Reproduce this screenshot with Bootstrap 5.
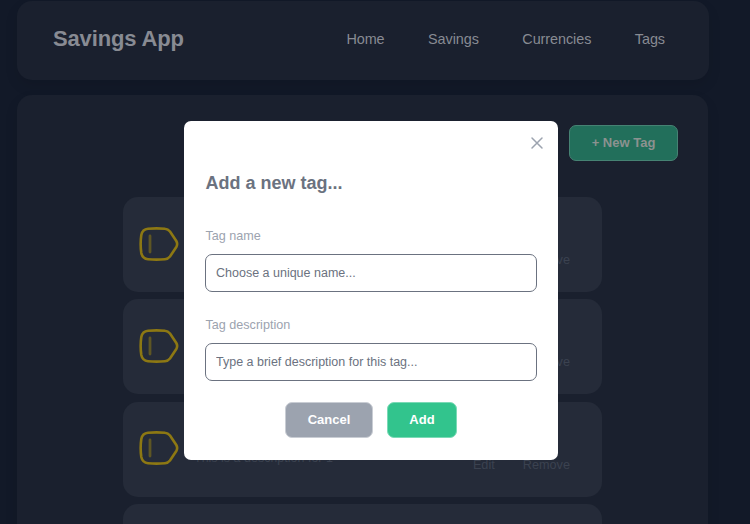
<!DOCTYPE html>
<html lang="en">
<head>
<meta charset="utf-8">
<meta name="viewport" content="width=device-width, initial-scale=1">
<title>Savings App</title>
<link rel="stylesheet" href="https://cdn.jsdelivr.net/npm/bootstrap@5.3.0/dist/css/bootstrap.min.css">
<style>
body { background: #121928; font-family: "Liberation Sans", Arial, sans-serif; }
.page-wrap { padding: 1px 41px 0 17px; }
.panel { background: #1a202e; border-radius: 15px; box-shadow: 0 6px 14px rgba(0,0,0,.09); }
.top-panel { height: 79px; padding: 0 44px 3px 36px; }
.app-name { font-size: 22px; line-height: 26px; letter-spacing: -.15px; color: #888b93; }
.top-links { gap: 43.5px; font-size: 14.4px; line-height: 20px; letter-spacing: -.06px; }
.top-links a { color: #888b93; }
.main-panel { width: 691px; height: 600px; margin-top: 15px; padding: 30px 30px 0 106px; }
.btn-app { font-size: 13px; font-weight: 700; line-height: 18px; height: 36px; border-radius: 7px; padding: 0 0 1px; }
.btn-new { width: 109px; background: #226f5b; border-color: #468273; color: #8c9290; }
.tag-list { width: 479px; gap: 7.4px; margin-top: 36px; }
.tag-item { height: 95px; flex: none; background: #252b39; border-radius: 15px; padding: 0 32px 0 15px; }
.tag-icon { width: 41px; height: 34px; margin-bottom: 2px; }
.tag-text { line-height: 18px; color: #3b4250; padding-left: 15px; }
.tag-desc { font-size: 12.5px; padding-top: 47px; }
.tag-actions { font-size: 12.7px; gap: 28px; padding-top: 54px; }
.dialog-box { left: 184px; top: 121px; width: 374px; height: 339px; background: #fff; border-radius: 7px; padding: 0 21px; }
.close-x { right: 14px; top: 15px; width: 14px; height: 14px; line-height: 0; }
.dialog-title { font-size: 18px; line-height: 22px; color: #6b7280; margin-top: 51px; padding-left: .5px; }
.dialog-form { padding-top: 33px; }
.field-label { font-size: 12.6px; line-height: 18px; color: #9ca3af; padding-left: .5px; }
.field-input { height: 38px; font-size: 12.5px; border: 1px solid #6b7280; border-radius: 7px; padding: 0 10px 1px; }
.field-input::placeholder { color: #6b7280; }
.field-label + .field-input { margin-top: 9px; }
.field-input + .field-label { margin-top: 24px; }
.form-actions { margin-top: 21px; gap: 14px; }
.btn-cancel { width: 88px; background: #9ca3af; border: 1px solid #c9cdd4; color: #fff; }
.btn-add { width: 70px; background: #32c48d; border: 1px solid #7bdab6; color: #fff; }
</style>
<script src="https://cdn.jsdelivr.net/npm/bootstrap@5.3.0/dist/js/bootstrap.bundle.min.js"></script>
</head>
<body>
<svg class="d-none">
  <symbol id="tag-icon" viewBox="0 0 41 34">
    <path d="M10 1.800Q18.500 1 27 1.800Q30 2 32 4.500L38.300 14Q40 17 38.300 20L32 29.500Q30 32 27 32.200Q18.500 33 10 32.200Q4.500 31.700 3.300 26Q2 17 3.300 8Q4.500 2.300 10 1.800Z" fill="none" stroke="#8d7813" stroke-width="2.600"/>
    <path d="M12 9V25" fill="none" stroke="#5e5624" stroke-width="2.800" stroke-linecap="round"/>
  </symbol>
</svg>
<div class="page-wrap vh-100 overflow-hidden">
  <nav class="panel top-panel d-flex align-items-center justify-content-between">
    <span class="app-name fw-bold">Savings App</span>
    <div class="top-links d-flex">
      <a class="text-decoration-none" href="#">Home</a>
      <a class="text-decoration-none" href="#">Savings</a>
      <a class="text-decoration-none" href="#">Currencies</a>
      <a class="text-decoration-none" href="#">Tags</a>
    </div>
  </nav>
  <main class="panel main-panel">
    <div class="d-flex justify-content-end"><button class="btn btn-app btn-new">+ New Tag</button></div>
    <div class="tag-list d-flex flex-column">
      <div class="tag-item d-flex align-items-center">
        <svg class="tag-icon"><use href="#tag-icon"/></svg>
        <div class="tag-text d-flex flex-grow-1 justify-content-between align-self-start">
          <span class="tag-desc">This is a description for 1</span>
          <span class="tag-actions d-flex"><span>Edit</span><span>Remove</span></span>
        </div>
      </div>
      <div class="tag-item d-flex align-items-center">
        <svg class="tag-icon"><use href="#tag-icon"/></svg>
        <div class="tag-text d-flex flex-grow-1 justify-content-between align-self-start">
          <span class="tag-desc">This is a description for 1</span>
          <span class="tag-actions d-flex"><span>Edit</span><span>Remove</span></span>
        </div>
      </div>
      <div class="tag-item d-flex align-items-center">
        <svg class="tag-icon"><use href="#tag-icon"/></svg>
        <div class="tag-text d-flex flex-grow-1 justify-content-between align-self-start">
          <span class="tag-desc">This is a description for 1</span>
          <span class="tag-actions d-flex"><span>Edit</span><span>Remove</span></span>
        </div>
      </div>
      <div class="tag-item"></div>
    </div>
  </main>
</div>
<div class="dialog-box position-absolute" role="dialog">
  <a class="close-x position-absolute" href="#" aria-label="Close"><svg width="14" height="14"><path d="M2 2L12 12M12 2L2 12" stroke="#9ca3af" stroke-width="1.500" stroke-linecap="round"/></svg></a>
  <h1 class="dialog-title fw-bold mb-0">Add a new tag...</h1>
  <form class="dialog-form">
    <label class="field-label d-block" for="tag-name">Tag name</label>
    <input class="field-input form-control" id="tag-name" placeholder="Choose a unique name...">
    <label class="field-label d-block" for="tag-desc">Tag description</label>
    <input class="field-input form-control" id="tag-desc" placeholder="Type a brief description for this tag...">
    <div class="form-actions d-flex justify-content-center">
      <button type="button" class="btn btn-app btn-cancel">Cancel</button>
      <button type="button" class="btn btn-app btn-add">Add</button>
    </div>
  </form>
</div>
</body>
</html>
